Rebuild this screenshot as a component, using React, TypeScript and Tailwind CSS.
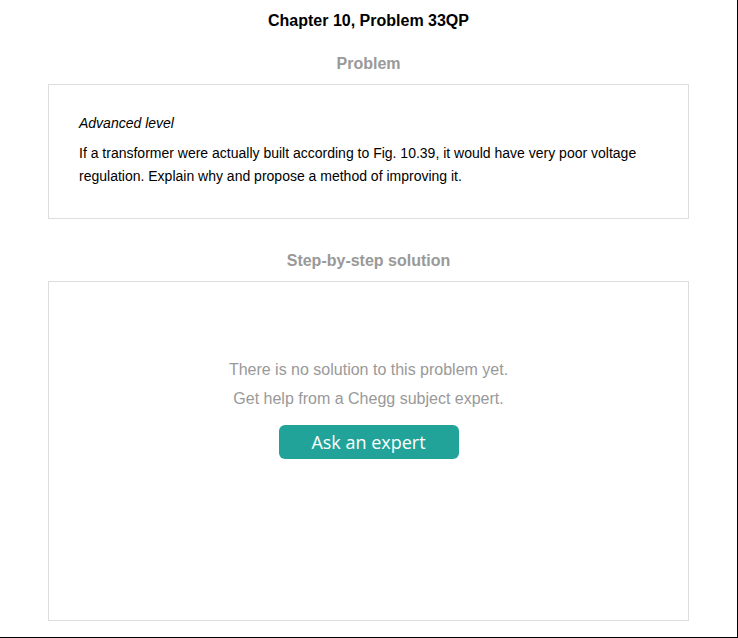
import React from 'react';

const font = { fontFamily: '"Liberation Sans", Arial, sans-serif' };

const SectionTitle = ({ children }: { children: React.ReactNode }) => (
  <h2 className="text-center text-[16px] font-bold leading-[20px] text-[#999999]">{children}</h2>
);

export default function App() {
  return (
    <div className="w-[738px] h-[638px] bg-white border-r border-b border-black box-border" style={font}>
      <h1 className="pt-[11px] text-center text-[16px] font-bold leading-[20px] text-black">
        Chapter 10, Problem 33QP
      </h1>

      <div className="mt-[23px]">
        <SectionTitle>Problem</SectionTitle>
      </div>
      <div className="mx-[48px] mt-[10px] border border-[#dddddd] px-[30px] pt-[27px] pb-[30px] text-[14px] leading-[23px] text-black">
        <p className="italic mb-[7px]">Advanced level</p>
        <p>
          If a transformer were actually built according to Fig. 10.39, it would have very poor voltage regulation.
          Explain why and propose a method of improving it.
        </p>
      </div>

      <div className="mt-[32px]">
        <SectionTitle>Step-by-step solution</SectionTitle>
      </div>
      <div className="mx-[48px] mt-[10px] h-[340px] border border-[#dddddd] flex flex-col items-center pt-[73px]">
        <p className="text-[16px] leading-[29px] text-[#999999]">There is no solution to this problem yet.</p>
        <p className="text-[16px] leading-[29px] text-[#999999]">Get help from a Chegg subject expert.</p>
        <button
          className="mt-[12px] w-[180px] h-[34px] rounded-[6px] bg-[#21a39a] text-white text-[18px] leading-[34px]"
          style={{ fontFamily: '"Open Sans", "DejaVu Sans", sans-serif' }}
        >
          Ask an expert
        </button>
      </div>
    </div>
  );
}
